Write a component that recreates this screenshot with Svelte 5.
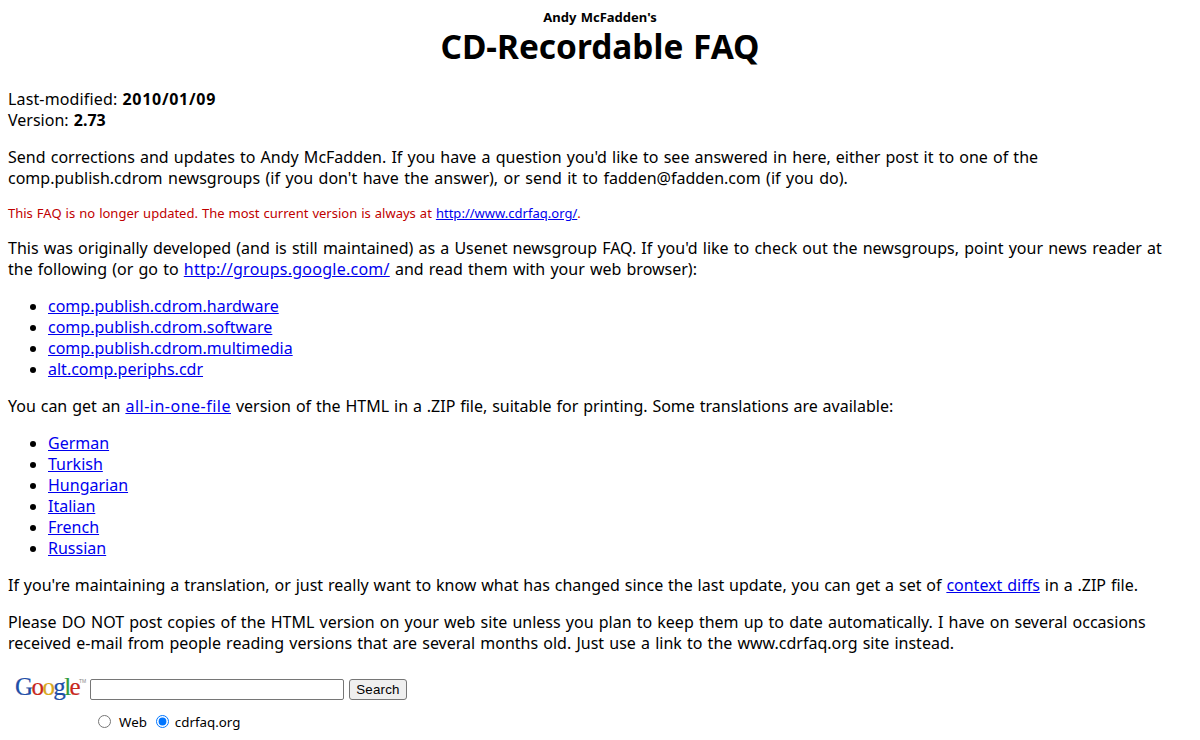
<script>
  const newsgroups = [
    'comp.publish.cdrom.hardware',
    'comp.publish.cdrom.software',
    'comp.publish.cdrom.multimedia',
    'alt.comp.periphs.cdr'
  ];
  const translations = ['German', 'Turkish', 'Hungarian', 'Italian', 'French', 'Russian'];
  const googleLetters = [
    ['G', '#1f4fa8'],
    ['o', '#c8281c'],
    ['o', '#d8a820'],
    ['g', '#1f4fa8'],
    ['l', '#2f9a3c'],
    ['e', '#c8281c']
  ];
</script>

<div class="page">
  <header class="title">
    <div class="byline">Andy McFadden's</div>
    <h1>CD-Recordable FAQ</h1>
  </header>

  <p class="meta">
    <span class="label">Last-modified:</span> <b class="date">2010/01/09</b><br />
    Version: <b>2.73</b>
  </p>

  <p>
    Send corrections and updates to Andy McFadden. If you have a question you'd like to see answered in here, either post it to one of the<br />
    <span class="roomy">comp.publish.cdrom newsgroups (if you don't have the answer), or send it to fadden@fadden.com (if you do).</span>
  </p>

  <p class="notice">
    This FAQ is no longer updated. The most current version is always at <a href="#top">http://www.cdrfaq.org/</a>.
  </p>

  <p>
    This was originally developed (and is still maintained) as a Usenet newsgroup FAQ. If you'd like to check out the newsgroups, point your news reader at<br />
    the following (or go to <a class="wide" href="#top">http://groups.google.com/</a> and read them with your web browser):
  </p>

  <ul>
    {#each newsgroups as group}
      <li><a href="#top">{group}</a></li>
    {/each}
  </ul>

  <p class="tight">
    You can get an <a class="hyphens" href="#top">all-in-one-file</a> version of the HTML in a .ZIP file, suitable for printing. Some translations are available:
  </p>

  <ul>
    {#each translations as lang}
      <li><a href="#top">{lang}</a></li>
    {/each}
  </ul>

  <p class="tight">
    If you're maintaining a translation, or just really want to know what has changed since the last update, you can get a set of <a href="#top">context diffs</a> in a .ZIP file.
  </p>

  <p>
    Please DO NOT post copies of the HTML version on your web site unless you plan to keep them up to date automatically. I have on several occasions<br />
    received e-mail from people reading versions that are several months old. Just use a link to the www.cdrfaq.org site instead.
  </p>

  <form class="search" on:submit|preventDefault>
    <div class="search-row">
      <span class="logo">{#each googleLetters as [ch, color]}<span style="color: {color}">{ch}</span>{/each}<sup>TM</sup></span>
      <input class="query" type="text" />
      <button type="button">Search</button>
    </div>
    <div class="scope">
      <label><input type="radio" name="scope" />Web</label>
      <label><input type="radio" name="scope" checked />cdrfaq.org</label>
    </div>
  </form>
</div>

<style>
  :global(body) {
    margin: 0;
    background: #fff;
    color: #000;
    font-family: "Noto Sans", "Open Sans", sans-serif;
    font-size: 16px;
    line-height: 21px;
    word-spacing: 1px;
    overflow: hidden;
  }

  .page {
    padding: 0 8px;
    height: 740px;
    overflow: hidden;
    box-sizing: border-box;
  }

  .title {
    text-align: center;
    padding-top: 9px;
  }

  .byline {
    font-size: 13px;
    font-weight: 700;
    line-height: 17px;
  }

  h1 {
    margin: 0;
    font-size: 33.4px;
    line-height: 41px;
    font-weight: 700;
  }

  p {
    margin: 16px 0;
    white-space: nowrap;
  }

  .meta {
    margin-top: 22px;
  }

  .label {
    letter-spacing: 0.14px;
  }

  .date {
    letter-spacing: 0.7px;
  }

  .roomy {
    word-spacing: 1.3px;
  }

  .tight {
    word-spacing: 0.72px;
  }

  .notice {
    font-size: 13px;
    line-height: 17px;
    word-spacing: 0.65px;
    color: #c00000;
  }

  .notice a {
    letter-spacing: 0.02px;
  }

  a {
    color: #0000ee;
    text-decoration: underline;
  }

  .wide {
    letter-spacing: 0.25px;
  }

  .hyphens {
    letter-spacing: 0.5px;
  }

  ul {
    margin: 16px 0;
    padding-left: 40px;
  }

  .search {
    margin-top: 23px;
    font-size: 13.33px;
    word-spacing: 0;
  }

  .search-row {
    display: flex;
    align-items: center;
    gap: 5px;
    padding-left: 7px;
    height: 24px;
  }

  .logo {
    font-family: "Liberation Serif", serif;
    font-size: 25px;
    line-height: 24px;
    width: 70px;
    letter-spacing: -1.6px;
    white-space: nowrap;
    margin-top: -4px;
    -webkit-text-stroke: 0.2px currentColor;
  }

  .logo sup {
    font-family: "Liberation Sans", sans-serif;
    font-size: 5px;
    color: #888;
    vertical-align: 12px;
    line-height: 0;
    letter-spacing: 0;
    -webkit-text-stroke: 0;
  }

  .query {
    width: 254px;
    height: 21px;
    box-sizing: border-box;
    border: 1px solid #767676;
    border-radius: 2px;
    padding: 1px 2px;
    margin: 0;
  }

  button {
    height: 21px;
    width: 58px;
    padding: 0;
    font: 13.33px "Liberation Sans", Arial, sans-serif;
    letter-spacing: 0.2px;
    background: #efefef;
    border: 1px solid #767676;
    border-radius: 3px;
    color: #000;
  }

  .scope {
    display: flex;
    gap: 9px;
    padding-left: 90px;
    margin-top: 12px;
    line-height: 18px;
  }

  .scope label {
    display: flex;
    align-items: center;
    gap: 8px;
  }

  .scope label:last-child {
    gap: 6px;
  }

  .scope input {
    width: 13px;
    height: 13px;
    margin: 0 0 2px;
    accent-color: #0075ff;
  }
</style>
